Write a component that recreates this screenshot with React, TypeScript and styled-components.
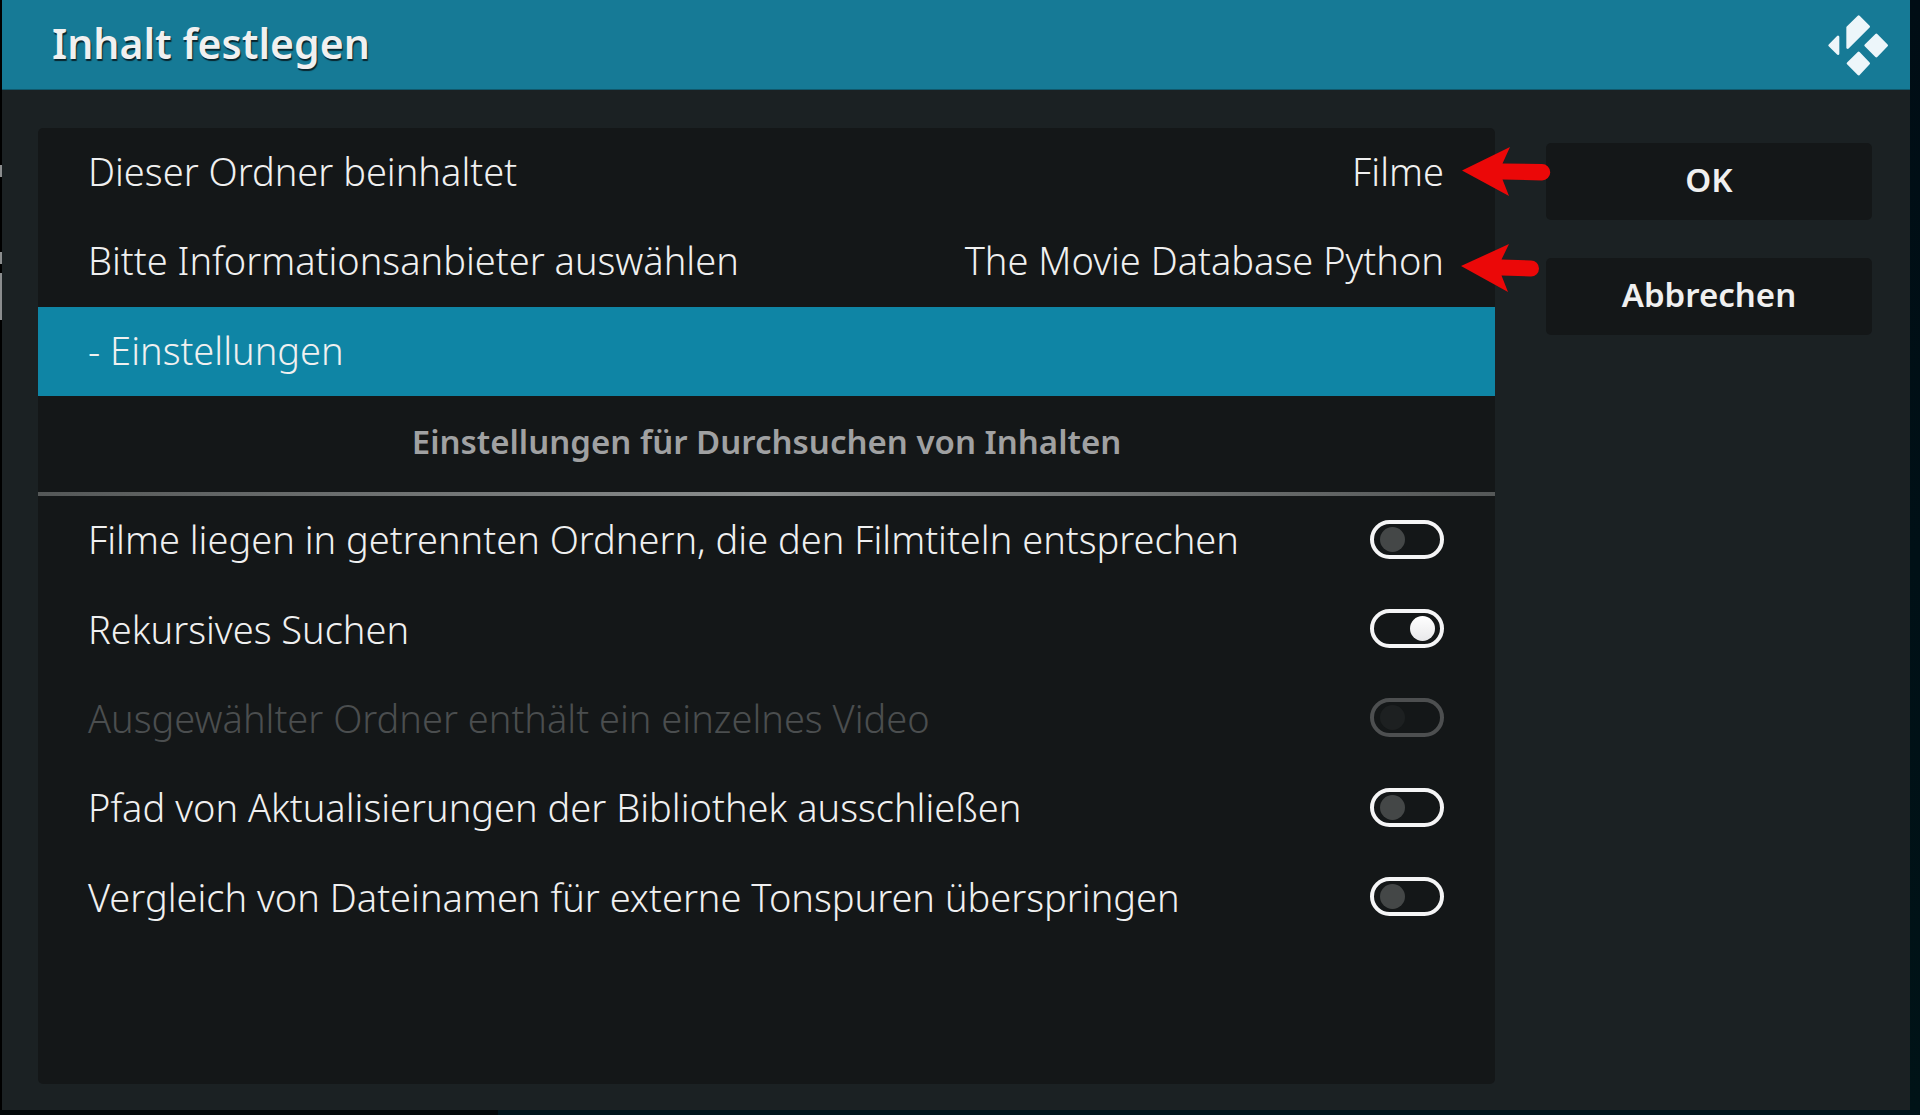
import React, { useState } from "react";
import styled, { createGlobalStyle } from "styled-components";

const GlobalStyle = createGlobalStyle`
  *, *::before, *::after { box-sizing: border-box; }
  body {
    margin: 0;
    background: #000;
    color: #f0f0f0;
    font-family: "Noto Sans", "Open Sans", sans-serif;
  }
  button, input { font: inherit; color: inherit; }
`;

const Backdrop = styled.div`
  min-height: 100vh;
  padding: 0 10px 5px 2px;
  display: flex;
  background:
    linear-gradient(#8b8d8e, #8b8d8e) 0 165px / 2px 12px no-repeat,
    linear-gradient(#8b8d8e, #8b8d8e) 0 252px / 2px 12px no-repeat,
    linear-gradient(#8b8d8e, #8b8d8e) 0 273px / 2px 47px no-repeat,
    linear-gradient(90deg, #030708 498px, #00141b 498px) 0 100% / 100% 5px no-repeat,
    linear-gradient(#000d15, #001317) 100% 0 / 10px 100% no-repeat,
    #000;
`;

const Dialog = styled.main`
  flex: 1;
  min-width: 0;
  display: flex;
  flex-direction: column;
  background: #1b2123;
`;

const TitleBar = styled.header`
  height: 90px;
  padding: 0 21px 0 50px;
  display: flex;
  align-items: center;
  justify-content: space-between;
  background: #167a96;
  border-bottom: 1px solid #10586c;
`;

const Title = styled.h1`
  margin: 0;
  padding-bottom: 4px;
  font-size: 41px;
  line-height: 56px;
  font-weight: 600;
  text-shadow: 1px 2px 1px rgba(0, 0, 0, 0.7);
`;

const Content = styled.div`
  flex: 1;
  display: flex;
  align-items: stretch;
  gap: 51px;
  padding: 38px 38px 26px 36px;
`;

const Panel = styled.section`
  flex: 1;
  min-width: 0;
  border-radius: 5px;
  background: #141718;
`;

const Rows = styled.div<{ $height: number }>`
  display: grid;
  grid-auto-rows: 1fr;
  min-height: ${(p) => p.$height}px;
`;

const rowLayout = `
  position: relative;
  display: flex;
  align-items: center;
  justify-content: space-between;
  gap: 24px;
  padding: 0 51px 3px 50px;
  font-size: 38px;
  line-height: 52px;
  font-weight: 300;
`;

const RowButton = styled.button<{ $focused?: boolean }>`
  ${rowLayout}
  border: 0;
  text-align: left;
  background: ${(p) => (p.$focused ? "#0f85a5" : "transparent")};
`;

const ToggleRow = styled.label<{ $disabled?: boolean }>`
  ${rowLayout}
  color: ${(p) => (p.$disabled ? "#4b4e4f" : "#f0f0f0")};
`;

const SectionTitle = styled.h2`
  margin: 0;
  height: 100px;
  padding-bottom: 8px;
  display: flex;
  align-items: center;
  justify-content: center;
  font-size: 33px;
  line-height: 46px;
  font-weight: 600;
  color: #a0a1a2;
  background: linear-gradient(90deg, #555858, #8a8d8d 50%, #555858) bottom / 100% 4px no-repeat;
`;

const Switch = styled.input`
  appearance: none;
  flex: none;
  margin: 0;
  width: 74px;
  height: 39px;
  padding: 0 5px 0 6px;
  display: flex;
  align-items: center;
  border: 4px solid #f5f5f6;
  border-radius: 20px;

  &::before {
    content: "";
    width: 25px;
    height: 25px;
    border-radius: 50%;
    background: #444747;
  }
  &:checked { justify-content: flex-end; }
  &:checked::before { background: linear-gradient(#fff, #e8e8ea); }
  &:disabled { border-color: #4d4f50; }
  &:disabled::before { background: #1d2021; }
`;

const Actions = styled.div`
  width: 326px;
  padding-top: 15px;
  display: flex;
  flex-direction: column;
  gap: 38px;
`;

const ActionButton = styled.button`
  height: 77px;
  padding: 0 0 4px;
  border: 0;
  border-radius: 5px;
  background: #141718;
  font-size: 33px;
  line-height: 46px;
  font-weight: 600;
`;

const Pointer = styled.svg`
  position: absolute;
  z-index: 1;
  left: calc(100% - 34px);
  top: 18px;
  pointer-events: none;
`;

const PointerLow = styled(Pointer)`
  top: 26px;
`;

const KodiLogo = () => (
  <svg width="62" height="62" viewBox="0 0 186 186" role="img" aria-label="Kodi">
    <g fill="#edf6fa" stroke="#edf6fa" strokeWidth="8" strokeLinejoin="round">
      <path d="M8 94 33 69V119Z" />
      <path d="M95 8 125 38 62 101V40Z" />
      <path d="M148 63 179 94 148 126 116 94Z" />
      <path d="M95 117 125 148 95 180 63 148Z" />
    </g>
  </svg>
);

const toggles = [
  { label: "Filme liegen in getrennten Ordnern, die den Filmtiteln entsprechen", on: false },
  { label: "Rekursives Suchen", on: true },
  { label: "Ausgewählter Ordner enthält ein einzelnes Video", on: false, disabled: true },
  { label: "Pfad von Aktualisierungen der Bibliothek ausschließen", on: false },
  { label: "Vergleich von Dateinamen für externe Tonspuren überspringen", on: false },
];

export default function App() {
  const [values, setValues] = useState(toggles.map((t) => t.on));
  const toggle = (index: number) =>
    setValues((prev) => prev.map((v, i) => (i === index ? !v : v)));

  return (
    <>
      <GlobalStyle />
      <Backdrop>
        <Dialog>
          <TitleBar>
            <Title>Inhalt festlegen</Title>
            <KodiLogo />
          </TitleBar>
          <Content>
            <Panel>
              <Rows $height={268}>
                <RowButton type="button">
                  <span>Dieser Ordner beinhaltet</span>
                  <span>Filme</span>
                  <Pointer width="90" height="52" viewBox="0 0 90 52" aria-hidden="true">
                    <path d="M1 24.500 49 1 41.500 17.500 81 18A8 8 0 0 1 81 34.500L41.500 33.500 48 50Z" fill="#eb0808" />
                  </Pointer>
                </RowButton>
                <RowButton type="button">
                  <span>Bitte Informationsanbieter auswählen</span>
                  <span>The Movie Database Python</span>
                  <PointerLow width="80" height="52" viewBox="0 0 80 52" aria-hidden="true">
                    <path d="M0 23 48 1 40.500 16.500 70 17.500A8 8 0 0 1 70 33.500L40.500 32.500 47 49Z" fill="#eb0808" />
                  </PointerLow>
                </RowButton>
                <RowButton type="button" $focused>
                  <span>- Einstellungen</span>
                </RowButton>
              </Rows>
              <SectionTitle>Einstellungen für Durchsuchen von Inhalten</SectionTitle>
              <Rows $height={447}>
                {toggles.map((t, i) => (
                  <ToggleRow key={t.label} $disabled={t.disabled}>
                    <span>{t.label}</span>
                    <Switch
                      type="checkbox"
                      role="switch"
                      checked={values[i]}
                      disabled={t.disabled}
                      onChange={() => toggle(i)}
                    />
                  </ToggleRow>
                ))}
              </Rows>
            </Panel>
            <Actions>
              <ActionButton type="button">OK</ActionButton>
              <ActionButton type="button">Abbrechen</ActionButton>
            </Actions>
          </Content>
        </Dialog>
      </Backdrop>
    </>
  );
}
